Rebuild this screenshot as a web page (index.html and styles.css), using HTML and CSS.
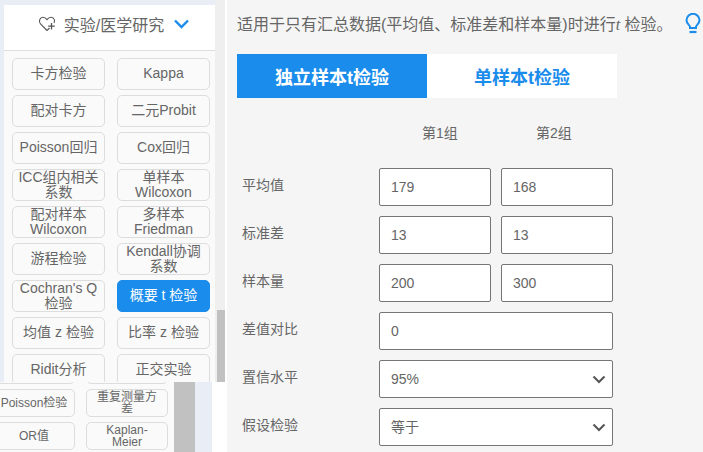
FILE: index.html
```html
<!DOCTYPE html>
<html lang="zh">
<head>
<meta charset="utf-8">
<title>概要 t 检验</title>
<link rel="stylesheet" href="styles.css">
</head>
<body>
<div class="page">
  <aside class="side">
    <div class="upper">
      <div class="panel">
        <div class="panel-head">
          <svg class="heart" width="18" height="17" viewBox="0 0 18 17" fill="none" stroke="#555" stroke-width="1.100"><path d="M9 15.500 2.500 9C.6 6.800 1.400 2.600 4.600 2.300 6.400 2.200 7.900 3.100 9 4.600 10.100 3.100 11.500 2.200 13.300 2.300 16.200 2.600 17.200 5.600 16 8"/><path d="M9 15.500l2.500-2.500"/><path d="M13.500 8v6.500M10.200 11.200h6.600" stroke-width="1.300"/></svg>
          <span class="panel-title">实验/医学研究</span>
          <svg class="chev" width="15" height="10" viewBox="0 0 15 10" fill="none" stroke="#1a8cec" stroke-width="2.400"><path d="M1 1.500 7.500 8 14 1.500"/></svg>
        </div>
        <div class="btns">
          <a class="btn">卡方检验</a><a class="btn">Kappa</a>
          <a class="btn">配对卡方</a><a class="btn">二元Probit</a>
          <a class="btn">Poisson回归</a><a class="btn">Cox回归</a>
          <a class="btn">ICC组内相关系数</a><a class="btn">单样本 Wilcoxon</a>
          <a class="btn">配对样本 Wilcoxon</a><a class="btn">多样本 Friedman</a>
          <a class="btn">游程检验</a><a class="btn">Kendall协调系数</a>
          <a class="btn">Cochran's Q 检验</a><a class="btn active">概要 t 检验</a>
          <a class="btn">均值 z 检验</a><a class="btn">比率 z 检验</a>
          <a class="btn">Ridit分析</a><a class="btn">正交实验</a>
        </div>
      </div>
      <div class="track"><div class="track-thumb"></div></div>
    </div>
    <div class="lower">
      <div class="lower-panel">
        <div class="lower-btns">
          <a class="btn small"></a><a class="btn small"></a>
          <a class="btn small">Poisson检验</a><a class="btn small">重复测量方差</a>
          <a class="btn small">OR值</a><a class="btn small">Kaplan-Meier</a>
        </div>
      </div>
      <div class="lower-thumb"></div>
      <div class="lower-track"></div>
    </div>
  </aside>
  <main class="main">
    <div class="desc">
      <p>适用于只有汇总数据(平均值、标准差和样本量)时进行<i>t</i> 检验。</p>
      <svg class="bulb" width="16" height="21" viewBox="0 0 16 21" fill="none" stroke="#1a8cec" stroke-width="2"><path d="M5 15V13.700C5 12.200 1.500 10.800 1.500 7.300a6.500 6.500 0 0 1 13 0C14.500 10.800 11 12.200 11 13.700V15z"/><path d="M4.500 19h7" stroke-width="2.200"/></svg>
    </div>
    <div class="tabs">
      <div class="tab on">独立样本t检验</div>
      <div class="tab">单样本t检验</div>
    </div>
    <div class="groups"><span>第1组</span><span>第2组</span></div>
    <form class="form">
      <label>平均值</label><input value="179"><input value="168">
      <label>标准差</label><input value="13"><input value="13">
      <label>样本量</label><input value="200"><input value="300">
      <label>差值对比</label><input class="wide" value="0">
      <label>置信水平</label>
      <div class="sel wide"><select><option>95%</option></select><svg width="14" height="9" viewBox="0 0 14 9" fill="none" stroke="#555" stroke-width="2"><path d="M1.500 1.500 7 7l5.500-5.500"/></svg></div>
      <label>假设检验</label>
      <div class="sel wide"><select><option>等于</option></select><svg width="14" height="9" viewBox="0 0 14 9" fill="none" stroke="#555" stroke-width="2"><path d="M1.500 1.500 7 7l5.500-5.500"/></svg></div>
    </form>
  </main>
</div>
</body>
</html>
```
FILE: styles.css
```css
* { box-sizing: border-box; }
html, body { margin: 0; height: 100%; overflow: hidden; }
body {
  font-family: "Liberation Sans", "Noto Sans CJK SC", sans-serif;
  color: #666;
  font-size: 14px;
  background: #f5f5f5;
}
.page { display: flex; height: 452px; }
.side { width: 227px; flex: none; background: #fff; display: flex; flex-direction: column; }
.upper { height: 382px; display: flex; overflow: hidden; }
.panel {
  width: 215px;
  padding: 5px 0 0 4px;
  background: #e9edf6;
  overflow: hidden;
}
.panel-head {
  height: 46px;
  background: #fff;
  border-bottom: 1px solid #ddd;
  display: flex;
  align-items: center;
  justify-content: center;
  gap: 6px;
  padding: 0 0 8px 8px;
}
.heart { margin-right: 2px; }
.panel-title { font-size: 16px; color: #666; }
.chev { margin-left: 4px; }
.btns {
  background: #fafafa;
  padding: 7px 5px 0 8px;
  display: grid;
  grid-template-columns: 93px 93px;
  grid-auto-rows: 32px;
  column-gap: 12px;
  row-gap: 5px;
  height: 400px;
}
.btn {
  display: flex;
  align-items: center;
  justify-content: center;
  text-align: center;
  background: #fafafa;
  border: 1px solid #ddd;
  border-radius: 5px;
  line-height: 14.500px;
  color: #666;
  overflow: hidden;
  padding: 0 4px 1px;
}
.btn.active { background: #1a8cec; border-color: #1a8cec; color: #fff; }
.track { width: 10px; background: #efefef; display: flex; justify-content: flex-end; align-items: flex-end; }
.track-thumb { width: 8px; height: 72px; background: #c1c1c1; }
.lower { height: 70px; display: flex; }
.lower-panel { width: 174px; background: #fafafa; overflow: hidden; }
.lower-btns {
  margin: -26px 0 0 -7px;
  display: grid;
  grid-template-columns: 82px 82px;
  grid-auto-rows: 28px;
  column-gap: 11px;
  row-gap: 5px;
}
.btn.small { font-size: 12px; line-height: 12px; padding: 0 5px; }
.lower-thumb { width: 21px; background: #c1c1c1; }
.lower-track { width: 17px; background: #e9edf6; }
.main { flex: 1; padding: 0 0 0 10px; min-width: 0; }
.desc { display: flex; align-items: center; height: 46px; justify-content: space-between; padding-right: 2px; }
.desc p { margin: 0; font-size: 16px; color: #666; white-space: nowrap; }
.desc i { font-family: "Liberation Serif", serif; }
.tabs { margin-top: 8px; display: flex; width: 380px; height: 44px; background: #fff; }
.tab {
  width: 190px;
  display: flex;
  align-items: center;
  justify-content: center;
  font-size: 18px;
  font-weight: 700;
  color: #1a8cec;
}
.tab.on { background: #1a8cec; color: #fff; }
.groups { display: flex; padding-left: 185px; margin-top: 26px; line-height: 18px; color: #666; }
.groups span { width: 114px; }
.form {
  margin-top: 26px;
  display: grid;
  grid-template-columns: 132px 112px 112px;
  grid-auto-rows: 38px;
  column-gap: 10px;
  row-gap: 10px;
}
.form label { padding: 0 0 6px 5px; align-self: center; color: #666; }
.form input, .form select {
  width: 100%;
  height: 38px;
  border: 1px solid #767676;
  border-radius: 2px;
  background: #fff;
  padding: 0 11px;
  font: inherit;
  color: #666;
  outline: none;
}
.wide { grid-column: 2 / 4; }
.sel { position: relative; }
.form select { appearance: none; -webkit-appearance: none; }
.sel svg { position: absolute; right: 7px; top: 15px; pointer-events: none; }
```
